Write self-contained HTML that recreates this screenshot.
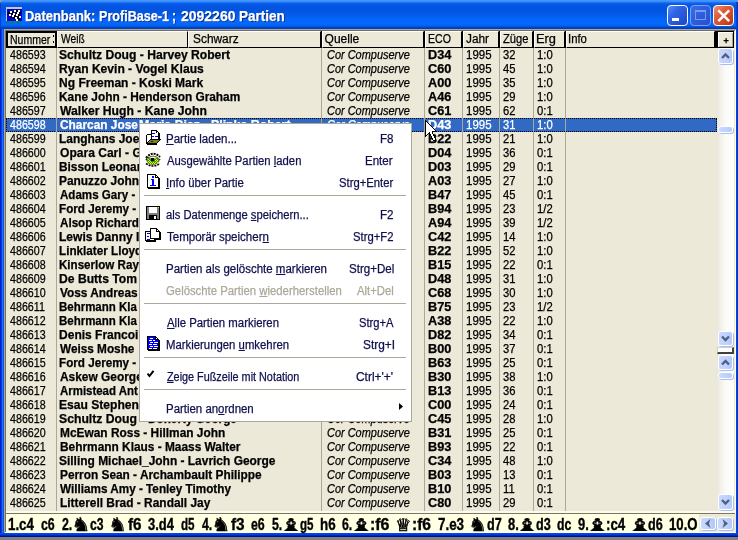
<!DOCTYPE html>
<html><head><meta charset="utf-8"><title>Datenbank: ProfiBase-1; 2092260 Partien</title>
<style>
html,body{margin:0;padding:0;background:#808080;}
body{width:738px;height:540px;overflow:hidden;position:relative;font-family:"Liberation Sans",sans-serif;font-size:12px;color:#000;}
#win{position:absolute;left:0;top:0;width:738px;height:540px;overflow:hidden;background:#808080;}
.a{position:absolute;}
.L{position:absolute;left:0;top:0;width:738px;height:540px;will-change:transform;}
.t{position:absolute;white-space:pre;transform-origin:0 0;line-height:20px;-webkit-text-stroke:0.25px currentColor;}
.t u{text-decoration:underline;text-underline-offset:1px;text-decoration-thickness:1px;}
#tb{left:0;top:0;width:738px;height:29px;border-radius:4px 2px 0 0;
background:linear-gradient(180deg,#4a98ff 0px,#3c8efb 1.5px,#1a72f2 2.5px,#0b62ea 3.5px,#0559e6 4.5px,#0355e2 6px,#0254e0 11px,#0357e4 13px,#045ce9 15px,#0462f4 17.5px,#0467fc 20px,#0468fd 24px,#0462f3 25.5px,#0354de 26.5px,#0044ca 27.5px,#0039b9 29px);}
#cornerbg{left:0;top:0;width:738px;height:10px;background:#a8a290;}
#bl{left:0;top:29px;width:4px;height:508px;background:linear-gradient(90deg,#001bd2 0,#001bd2 1px,#0a40e2 1px,#0a40e2 2px,#1670f2 2px,#1670f2 3px,#0a57e3 3px);}
#br{left:736px;top:29px;width:2px;height:508px;background:linear-gradient(90deg,#0046e6 0,#0046e6 1px,#0038d6 1px);}
#bb{left:0;top:533px;width:738px;height:4px;background:linear-gradient(180deg,#0846e2 0,#0846e2 1px,#0440dc 1px,#0440dc 2px,#0028b8 2px,#0028b8 3px,#00128e 3px);}
#client{left:4px;top:29px;width:732px;height:504px;background:#ece9d8;}
.hc{position:absolute;top:31px;height:16px;background:#ece9d8;border-top:1px solid #fff;border-left:1px solid #fff;border-right:1px solid #000;border-bottom:1px solid #000;box-sizing:border-box;height:17px;}
.vl{position:absolute;top:48px;width:1px;height:463px;background:#aca899;}
#menu{left:139px;top:123px;width:273px;height:299px;background:#fff;border:1px solid #aca899;box-sizing:border-box;}
.sep{position:absolute;left:144px;width:262px;height:1px;background:#aca899;}
.sb{position:absolute;left:718px;width:15px;box-sizing:border-box;border:1px solid #fff;border-radius:3px;background:linear-gradient(90deg,#c9d8fd 0%,#bfd1fc 60%,#b3c7f8 100%);box-shadow:1px 1px 0 #a9bdf0;}
</style></head><body>
<div id="win">
<div id="cornerbg" class="a"></div>
<div id="tb" class="a"></div>
<div class="a" style="left:736px;top:2px;width:2px;height:27px;background:linear-gradient(90deg,#0848dc,#0030c4)"></div><div class="a" style="left:0;top:3px;width:1px;height:26px;background:#0a3cd4"></div>
<div id="bl" class="a"></div><div id="br" class="a"></div><div id="bb" class="a"></div>
<div id="client" class="a"></div>
<!-- sunken border -->
<div class="a" style="left:4px;top:29px;width:732px;height:1px;background:#b0a98f"></div>
<div class="a" style="left:4px;top:29px;width:1px;height:504px;background:#b0a98f"></div>
<div class="a" style="left:5px;top:30px;width:730px;height:1px;background:#716f64"></div>
<div class="a" style="left:5px;top:30px;width:1px;height:503px;background:#716f64"></div>
<div class="a" style="left:734px;top:31px;width:1px;height:502px;background:#ece9d8"></div><div class="a" style="left:735px;top:30px;width:1px;height:503px;background:#fffef2"></div>
<!-- header cells -->
<div class="hc" style="left:6px;width:51px;border:2px solid #000;"></div>
<div class="hc" style="left:57px;width:131px"></div>
<div class="hc" style="left:188px;width:133px"></div>
<div class="hc" style="left:322px;width:102px"></div>
<div class="hc" style="left:425px;width:37px"></div>
<div class="hc" style="left:463px;width:36px"></div>
<div class="hc" style="left:500px;width:33px"></div>
<div class="hc" style="left:534px;width:31px"></div>
<div class="hc" style="left:566px;width:149px"></div>
<div class="hc" style="left:715px;width:19px;border-left:3px solid #000;border-top:1px solid #000;box-shadow:inset 1px 1px 0 #fff,inset -1px -1px 0 #aca899;"></div>
<div class="a" style="left:321px;top:31px;width:1px;height:17px;background:#000"></div>
<div class="a" style="left:424px;top:31px;width:1px;height:17px;background:#000"></div>
<div class="a" style="left:462px;top:31px;width:1px;height:17px;background:#000"></div>
<div class="a" style="left:499px;top:31px;width:1px;height:17px;background:#000"></div>
<div class="a" style="left:533px;top:31px;width:1px;height:17px;background:#000"></div>
<div class="a" style="left:565px;top:31px;width:1px;height:17px;background:#000"></div>
<div class="a" style="left:53px;top:35px;width:1px;height:2px;background:#000"></div><div class="a" style="left:53px;top:41px;width:1px;height:2px;background:#000"></div>
<!-- selected row -->
<div class="a" style="left:6px;top:118px;width:711px;height:14px;background:#316ac5;box-sizing:border-box;border:1px dotted #000;"></div>
<!-- column lines -->
<div class="vl" style="left:56px"></div><div class="vl" style="left:321px"></div><div class="vl" style="left:424px"></div>
<div class="vl" style="left:462px"></div><div class="vl" style="left:499px"></div><div class="vl" style="left:533px"></div><div class="vl" style="left:565px"></div>
<!-- scrollbar -->
<div class="a" style="left:717px;top:48px;width:17px;height:463px;background:linear-gradient(90deg,#e9e7dc 0,#f3f2ea 4px,#fbfbf8 9px,#fefefd 17px)"></div>
<!-- bottom -->
<div class="a" style="left:6px;top:511px;width:730px;height:2px;background:#fbfaf3"></div>
<div class="a" style="left:5px;top:513px;width:730px;height:1px;background:#7d775f"></div>
<div class="a" style="left:6px;top:514px;width:730px;height:19px;background:#ffffe1"></div>
<div class="a" style="left:699px;top:514px;width:37px;height:19px;background:#ece9d8"></div>
<div class="a" style="left:5px;top:532px;width:731px;height:1px;background:#fff"></div>
<div class="sb" style="top:48px;height:16px"></div><svg class="a" style="left:718px;top:48px" width="15" height="16" viewBox="0 0 15 16"><path d="M4 10.0 L7.5 6.5 L11 10.0" stroke="#4d6185" stroke-width="2.4" fill="none"/></svg>
<div class="sb" style="top:126px;height:7px"></div>
<div class="sb" style="top:331px;height:15px"></div><svg class="a" style="left:718px;top:331px" width="15" height="15" viewBox="0 0 15 15"><path d="M4 5.5 L7.5 9.0 L11 5.5" stroke="#4d6185" stroke-width="2.4" fill="none"/></svg>
<div class="a" style="left:717px;top:347px;width:17px;height:7px;background:#fff;border-right:2px solid #404040;border-bottom:2px solid #404040;border-top:1px solid #d4d0c8;border-left:1px solid #d4d0c8;box-sizing:border-box"></div>
<div class="sb" style="top:355px;height:15px"></div><svg class="a" style="left:718px;top:355px" width="15" height="15" viewBox="0 0 15 15"><path d="M4 9.5 L7.5 6.0 L11 9.5" stroke="#4d6185" stroke-width="2.4" fill="none"/></svg>
<div class="sb" style="top:372px;height:7px"></div>
<div class="sb" style="top:494px;height:16px"></div><svg class="a" style="left:718px;top:494px" width="15" height="16" viewBox="0 0 15 16"><path d="M4 6.0 L7.5 9.5 L11 6.0" stroke="#4d6185" stroke-width="2.4" fill="none"/></svg>
<div class="sb" style="left:700px;top:517px;width:16px;height:13px"></div>
<svg class="a" style="left:700px;top:517px" width="16" height="13" viewBox="0 0 16 13"><path d="M10.5 2 L5 6.5 L10.5 11 L9 6.5 Z" fill="#4d6185"/></svg>
<div class="sb" style="left:717px;top:517px;width:16px;height:13px"></div>
<svg class="a" style="left:717px;top:517px" width="16" height="13" viewBox="0 0 16 13"><path d="M5.5 2 L11 6.5 L5.5 11 L7 6.5 Z" fill="#4d6185"/></svg>
<div class="L"><span class="t" style="top:44.84px;font-size:12px;left:9.80px;transform:scaleX(0.8900);">486593</span>
<span class="t" style="top:44.84px;font-size:12px;left:59.09px;transform:scaleX(1.0101);font-weight:bold;">Schultz Doug - Harvey Robert</span>
<span class="t" style="top:44.84px;font-size:12px;left:326.79px;transform:scaleX(0.9124);font-style:italic;">Cor Compuserve</span>
<span class="t" style="top:44.84px;font-size:12px;left:427.64px;transform:scaleX(1.0619);font-weight:bold;">D34</span>
<span class="t" style="top:44.84px;font-size:12px;left:465.64px;transform:scaleX(0.9560);">1995</span>
<span class="t" style="top:44.84px;font-size:12px;left:503.27px;transform:scaleX(0.9333);">32</span>
<span class="t" style="top:44.84px;font-size:12px;left:537.26px;transform:scaleX(0.9400);">1:0</span>
<span class="t" style="top:58.84px;font-size:12px;left:9.80px;transform:scaleX(0.8900);">486594</span>
<span class="t" style="top:58.84px;font-size:12px;left:59.09px;transform:scaleX(1.0063);font-weight:bold;">Ryan Kevin - Vogel Klaus</span>
<span class="t" style="top:58.84px;font-size:12px;left:326.79px;transform:scaleX(0.9124);font-style:italic;">Cor Compuserve</span>
<span class="t" style="top:58.84px;font-size:12px;left:427.64px;transform:scaleX(1.0619);font-weight:bold;">C60</span>
<span class="t" style="top:58.84px;font-size:12px;left:465.64px;transform:scaleX(0.9560);">1995</span>
<span class="t" style="top:58.84px;font-size:12px;left:503.27px;transform:scaleX(0.9333);">45</span>
<span class="t" style="top:58.84px;font-size:12px;left:537.26px;transform:scaleX(0.9400);">1:0</span>
<span class="t" style="top:72.84px;font-size:12px;left:9.80px;transform:scaleX(0.8900);">486595</span>
<span class="t" style="top:72.84px;font-size:12px;left:59.10px;font-weight:bold;">Ng Freeman - Koski Mark</span>
<span class="t" style="top:72.84px;font-size:12px;left:326.79px;transform:scaleX(0.9124);font-style:italic;">Cor Compuserve</span>
<span class="t" style="top:72.84px;font-size:12px;left:427.64px;transform:scaleX(1.0619);font-weight:bold;">A00</span>
<span class="t" style="top:72.84px;font-size:12px;left:465.64px;transform:scaleX(0.9560);">1995</span>
<span class="t" style="top:72.84px;font-size:12px;left:503.27px;transform:scaleX(0.9333);">35</span>
<span class="t" style="top:72.84px;font-size:12px;left:537.26px;transform:scaleX(0.9400);">1:0</span>
<span class="t" style="top:86.84px;font-size:12px;left:9.80px;transform:scaleX(0.8900);">486596</span>
<span class="t" style="top:86.84px;font-size:12px;left:59.11px;transform:scaleX(0.9885);font-weight:bold;">Kane John - Henderson Graham</span>
<span class="t" style="top:86.84px;font-size:12px;left:326.79px;transform:scaleX(0.9124);font-style:italic;">Cor Compuserve</span>
<span class="t" style="top:86.84px;font-size:12px;left:427.64px;transform:scaleX(1.0619);font-weight:bold;">A46</span>
<span class="t" style="top:86.84px;font-size:12px;left:465.64px;transform:scaleX(0.9560);">1995</span>
<span class="t" style="top:86.84px;font-size:12px;left:503.27px;transform:scaleX(0.9333);">29</span>
<span class="t" style="top:86.84px;font-size:12px;left:537.26px;transform:scaleX(0.9400);">1:0</span>
<span class="t" style="top:100.84px;font-size:12px;left:9.80px;transform:scaleX(0.8900);">486597</span>
<span class="t" style="top:100.84px;font-size:12px;left:60.10px;transform:scaleX(1.0132);font-weight:bold;">Walker Hugh - Kane John</span>
<span class="t" style="top:100.84px;font-size:12px;left:326.79px;transform:scaleX(0.9124);font-style:italic;">Cor Compuserve</span>
<span class="t" style="top:100.84px;font-size:12px;left:427.64px;transform:scaleX(1.0619);font-weight:bold;">C61</span>
<span class="t" style="top:100.84px;font-size:12px;left:465.64px;transform:scaleX(0.9560);">1995</span>
<span class="t" style="top:100.84px;font-size:12px;left:503.27px;transform:scaleX(0.9333);">62</span>
<span class="t" style="top:100.84px;font-size:12px;left:537.26px;transform:scaleX(0.9400);">0:1</span>
<span class="t" style="top:114.84px;font-size:12px;left:9.80px;transform:scaleX(0.8900);color:#fff;">486598</span>
<span class="t" style="top:114.84px;font-size:12px;left:60.10px;transform:scaleX(0.9897);color:#fff;font-weight:bold;">Charcan Jose</span>
<span class="t" style="top:114.84px;font-size:12px;left:138.57px;transform:scaleX(1.0281);color:#fff;font-weight:bold;">Maria Diaz - Plinke Robert</span>
<span class="t" style="top:114.84px;font-size:12px;left:326.79px;transform:scaleX(0.9124);color:#fff;font-style:italic;">Cor Compuserve</span>
<span class="t" style="top:114.84px;font-size:12px;left:427.64px;transform:scaleX(1.0619);color:#fff;font-weight:bold;">D43</span>
<span class="t" style="top:114.84px;font-size:12px;left:465.64px;transform:scaleX(0.9560);color:#fff;">1995</span>
<span class="t" style="top:114.84px;font-size:12px;left:503.27px;transform:scaleX(0.9333);color:#fff;">31</span>
<span class="t" style="top:114.84px;font-size:12px;left:537.26px;transform:scaleX(0.9400);color:#fff;">1:0</span>
<span class="t" style="top:128.84px;font-size:12px;left:9.80px;transform:scaleX(0.8900);">486599</span>
<span class="t" style="top:128.84px;font-size:12px;left:59.11px;transform:scaleX(0.9949);font-weight:bold;">Langhans Joe</span>
<span class="t" style="top:128.84px;font-size:12px;left:326.79px;transform:scaleX(0.9124);font-style:italic;">Cor Compuserve</span>
<span class="t" style="top:128.84px;font-size:12px;left:427.64px;transform:scaleX(1.0619);font-weight:bold;">B22</span>
<span class="t" style="top:128.84px;font-size:12px;left:465.64px;transform:scaleX(0.9560);">1995</span>
<span class="t" style="top:128.84px;font-size:12px;left:503.27px;transform:scaleX(0.9333);">21</span>
<span class="t" style="top:128.84px;font-size:12px;left:537.26px;transform:scaleX(0.9400);">1:0</span>
<span class="t" style="top:142.84px;font-size:12px;left:9.80px;transform:scaleX(0.8900);">486600</span>
<span class="t" style="top:142.84px;font-size:12px;left:60.10px;transform:scaleX(1.0049);font-weight:bold;">Opara Carl - G</span>
<span class="t" style="top:142.84px;font-size:12px;left:326.79px;transform:scaleX(0.9124);font-style:italic;">Cor Compuserve</span>
<span class="t" style="top:142.84px;font-size:12px;left:427.64px;transform:scaleX(1.0619);font-weight:bold;">D04</span>
<span class="t" style="top:142.84px;font-size:12px;left:465.64px;transform:scaleX(0.9560);">1995</span>
<span class="t" style="top:142.84px;font-size:12px;left:503.27px;transform:scaleX(0.9333);">36</span>
<span class="t" style="top:142.84px;font-size:12px;left:537.26px;transform:scaleX(0.9400);">0:1</span>
<span class="t" style="top:156.84px;font-size:12px;left:9.80px;transform:scaleX(0.8900);">486601</span>
<span class="t" style="top:156.84px;font-size:12px;left:59.11px;transform:scaleX(0.9866);font-weight:bold;">Bisson Leonar</span>
<span class="t" style="top:156.84px;font-size:12px;left:326.79px;transform:scaleX(0.9124);font-style:italic;">Cor Compuserve</span>
<span class="t" style="top:156.84px;font-size:12px;left:427.64px;transform:scaleX(1.0619);font-weight:bold;">D03</span>
<span class="t" style="top:156.84px;font-size:12px;left:465.64px;transform:scaleX(0.9560);">1995</span>
<span class="t" style="top:156.84px;font-size:12px;left:503.27px;transform:scaleX(0.9333);">29</span>
<span class="t" style="top:156.84px;font-size:12px;left:537.26px;transform:scaleX(0.9400);">0:1</span>
<span class="t" style="top:170.84px;font-size:12px;left:9.80px;transform:scaleX(0.8900);">486602</span>
<span class="t" style="top:170.84px;font-size:12px;left:59.11px;transform:scaleX(0.9924);font-weight:bold;">Panuzzo John</span>
<span class="t" style="top:170.84px;font-size:12px;left:326.79px;transform:scaleX(0.9124);font-style:italic;">Cor Compuserve</span>
<span class="t" style="top:170.84px;font-size:12px;left:427.64px;transform:scaleX(1.0619);font-weight:bold;">A03</span>
<span class="t" style="top:170.84px;font-size:12px;left:465.64px;transform:scaleX(0.9560);">1995</span>
<span class="t" style="top:170.84px;font-size:12px;left:503.27px;transform:scaleX(0.9333);">27</span>
<span class="t" style="top:170.84px;font-size:12px;left:537.26px;transform:scaleX(0.9400);">1:0</span>
<span class="t" style="top:184.84px;font-size:12px;left:9.80px;transform:scaleX(0.8900);">486603</span>
<span class="t" style="top:184.84px;font-size:12px;left:60.10px;transform:scaleX(0.9641);font-weight:bold;">Adams Gary -</span>
<span class="t" style="top:184.84px;font-size:12px;left:326.79px;transform:scaleX(0.9124);font-style:italic;">Cor Compuserve</span>
<span class="t" style="top:184.84px;font-size:12px;left:427.64px;transform:scaleX(1.0619);font-weight:bold;">B47</span>
<span class="t" style="top:184.84px;font-size:12px;left:465.64px;transform:scaleX(0.9560);">1995</span>
<span class="t" style="top:184.84px;font-size:12px;left:503.27px;transform:scaleX(0.9333);">45</span>
<span class="t" style="top:184.84px;font-size:12px;left:537.26px;transform:scaleX(0.9400);">0:1</span>
<span class="t" style="top:198.84px;font-size:12px;left:9.80px;transform:scaleX(0.8900);">486604</span>
<span class="t" style="top:198.84px;font-size:12px;left:59.13px;transform:scaleX(0.9731);font-weight:bold;">Ford Jeremy -</span>
<span class="t" style="top:198.84px;font-size:12px;left:326.79px;transform:scaleX(0.9124);font-style:italic;">Cor Compuserve</span>
<span class="t" style="top:198.84px;font-size:12px;left:427.64px;transform:scaleX(1.0619);font-weight:bold;">B94</span>
<span class="t" style="top:198.84px;font-size:12px;left:465.64px;transform:scaleX(0.9560);">1995</span>
<span class="t" style="top:198.84px;font-size:12px;left:503.27px;transform:scaleX(0.9333);">23</span>
<span class="t" style="top:198.84px;font-size:12px;left:537.26px;transform:scaleX(0.9400);">1/2</span>
<span class="t" style="top:212.84px;font-size:12px;left:9.80px;transform:scaleX(0.8900);">486605</span>
<span class="t" style="top:212.84px;font-size:12px;left:60.10px;transform:scaleX(0.9704);font-weight:bold;">Alsop Richard</span>
<span class="t" style="top:212.84px;font-size:12px;left:326.79px;transform:scaleX(0.9124);font-style:italic;">Cor Compuserve</span>
<span class="t" style="top:212.84px;font-size:12px;left:427.64px;transform:scaleX(1.0619);font-weight:bold;">A94</span>
<span class="t" style="top:212.84px;font-size:12px;left:465.64px;transform:scaleX(0.9560);">1995</span>
<span class="t" style="top:212.84px;font-size:12px;left:503.27px;transform:scaleX(0.9333);">39</span>
<span class="t" style="top:212.84px;font-size:12px;left:537.26px;transform:scaleX(0.9400);">1/2</span>
<span class="t" style="top:226.84px;font-size:12px;left:9.80px;transform:scaleX(0.8900);">486606</span>
<span class="t" style="top:226.84px;font-size:12px;left:59.09px;transform:scaleX(1.0051);font-weight:bold;">Lewis Danny I</span>
<span class="t" style="top:226.84px;font-size:12px;left:326.79px;transform:scaleX(0.9124);font-style:italic;">Cor Compuserve</span>
<span class="t" style="top:226.84px;font-size:12px;left:427.64px;transform:scaleX(1.0619);font-weight:bold;">C42</span>
<span class="t" style="top:226.84px;font-size:12px;left:465.64px;transform:scaleX(0.9560);">1995</span>
<span class="t" style="top:226.84px;font-size:12px;left:503.27px;transform:scaleX(0.9333);">14</span>
<span class="t" style="top:226.84px;font-size:12px;left:537.26px;transform:scaleX(0.9400);">1:0</span>
<span class="t" style="top:240.84px;font-size:12px;left:9.80px;transform:scaleX(0.8900);">486607</span>
<span class="t" style="top:240.84px;font-size:12px;left:59.12px;transform:scaleX(0.9750);font-weight:bold;">Linklater Lloyd</span>
<span class="t" style="top:240.84px;font-size:12px;left:326.79px;transform:scaleX(0.9124);font-style:italic;">Cor Compuserve</span>
<span class="t" style="top:240.84px;font-size:12px;left:427.64px;transform:scaleX(1.0619);font-weight:bold;">B22</span>
<span class="t" style="top:240.84px;font-size:12px;left:465.64px;transform:scaleX(0.9560);">1995</span>
<span class="t" style="top:240.84px;font-size:12px;left:503.27px;transform:scaleX(0.9333);">52</span>
<span class="t" style="top:240.84px;font-size:12px;left:537.26px;transform:scaleX(0.9400);">1:0</span>
<span class="t" style="top:254.84px;font-size:12px;left:9.80px;transform:scaleX(0.8900);">486608</span>
<span class="t" style="top:254.84px;font-size:12px;left:59.13px;transform:scaleX(0.9659);font-weight:bold;">Kinserlow Ray</span>
<span class="t" style="top:254.84px;font-size:12px;left:326.79px;transform:scaleX(0.9124);font-style:italic;">Cor Compuserve</span>
<span class="t" style="top:254.84px;font-size:12px;left:427.64px;transform:scaleX(1.0619);font-weight:bold;">B15</span>
<span class="t" style="top:254.84px;font-size:12px;left:465.64px;transform:scaleX(0.9560);">1995</span>
<span class="t" style="top:254.84px;font-size:12px;left:503.27px;transform:scaleX(0.9333);">22</span>
<span class="t" style="top:254.84px;font-size:12px;left:537.26px;transform:scaleX(0.9400);">0:1</span>
<span class="t" style="top:268.84px;font-size:12px;left:9.80px;transform:scaleX(0.8900);">486609</span>
<span class="t" style="top:268.84px;font-size:12px;left:59.09px;transform:scaleX(1.0118);font-weight:bold;">De Butts Tom</span>
<span class="t" style="top:268.84px;font-size:12px;left:326.79px;transform:scaleX(0.9124);font-style:italic;">Cor Compuserve</span>
<span class="t" style="top:268.84px;font-size:12px;left:427.64px;transform:scaleX(1.0619);font-weight:bold;">D48</span>
<span class="t" style="top:268.84px;font-size:12px;left:465.64px;transform:scaleX(0.9560);">1995</span>
<span class="t" style="top:268.84px;font-size:12px;left:503.27px;transform:scaleX(0.9333);">31</span>
<span class="t" style="top:268.84px;font-size:12px;left:537.26px;transform:scaleX(0.9400);">1:0</span>
<span class="t" style="top:282.84px;font-size:12px;left:9.80px;transform:scaleX(0.8900);">486610</span>
<span class="t" style="top:282.84px;font-size:12px;left:60.10px;transform:scaleX(0.9859);font-weight:bold;">Voss Andreas</span>
<span class="t" style="top:282.84px;font-size:12px;left:326.79px;transform:scaleX(0.9124);font-style:italic;">Cor Compuserve</span>
<span class="t" style="top:282.84px;font-size:12px;left:427.64px;transform:scaleX(1.0619);font-weight:bold;">C68</span>
<span class="t" style="top:282.84px;font-size:12px;left:465.64px;transform:scaleX(0.9560);">1995</span>
<span class="t" style="top:282.84px;font-size:12px;left:503.27px;transform:scaleX(0.9333);">30</span>
<span class="t" style="top:282.84px;font-size:12px;left:537.26px;transform:scaleX(0.9400);">1:0</span>
<span class="t" style="top:296.84px;font-size:12px;left:9.80px;transform:scaleX(0.8900);">486611</span>
<span class="t" style="top:296.84px;font-size:12px;left:59.14px;transform:scaleX(0.9568);font-weight:bold;">Behrmann Kla</span>
<span class="t" style="top:296.84px;font-size:12px;left:326.79px;transform:scaleX(0.9124);font-style:italic;">Cor Compuserve</span>
<span class="t" style="top:296.84px;font-size:12px;left:427.64px;transform:scaleX(1.0619);font-weight:bold;">B75</span>
<span class="t" style="top:296.84px;font-size:12px;left:465.64px;transform:scaleX(0.9560);">1995</span>
<span class="t" style="top:296.84px;font-size:12px;left:503.27px;transform:scaleX(0.9333);">23</span>
<span class="t" style="top:296.84px;font-size:12px;left:537.26px;transform:scaleX(0.9400);">1/2</span>
<span class="t" style="top:310.84px;font-size:12px;left:9.80px;transform:scaleX(0.8900);">486612</span>
<span class="t" style="top:310.84px;font-size:12px;left:59.14px;transform:scaleX(0.9568);font-weight:bold;">Behrmann Kla</span>
<span class="t" style="top:310.84px;font-size:12px;left:326.79px;transform:scaleX(0.9124);font-style:italic;">Cor Compuserve</span>
<span class="t" style="top:310.84px;font-size:12px;left:427.64px;transform:scaleX(1.0619);font-weight:bold;">A38</span>
<span class="t" style="top:310.84px;font-size:12px;left:465.64px;transform:scaleX(0.9560);">1995</span>
<span class="t" style="top:310.84px;font-size:12px;left:503.27px;transform:scaleX(0.9333);">22</span>
<span class="t" style="top:310.84px;font-size:12px;left:537.26px;transform:scaleX(0.9400);">1:0</span>
<span class="t" style="top:324.84px;font-size:12px;left:9.80px;transform:scaleX(0.8900);">486613</span>
<span class="t" style="top:324.84px;font-size:12px;left:59.10px;font-weight:bold;">Denis Francoi</span>
<span class="t" style="top:324.84px;font-size:12px;left:326.79px;transform:scaleX(0.9124);font-style:italic;">Cor Compuserve</span>
<span class="t" style="top:324.84px;font-size:12px;left:427.64px;transform:scaleX(1.0619);font-weight:bold;">D82</span>
<span class="t" style="top:324.84px;font-size:12px;left:465.64px;transform:scaleX(0.9560);">1995</span>
<span class="t" style="top:324.84px;font-size:12px;left:503.27px;transform:scaleX(0.9333);">34</span>
<span class="t" style="top:324.84px;font-size:12px;left:537.26px;transform:scaleX(0.9400);">0:1</span>
<span class="t" style="top:338.84px;font-size:12px;left:9.80px;transform:scaleX(0.8900);">486614</span>
<span class="t" style="top:338.84px;font-size:12px;left:60.10px;transform:scaleX(0.9816);font-weight:bold;">Weiss Moshe</span>
<span class="t" style="top:338.84px;font-size:12px;left:326.79px;transform:scaleX(0.9124);font-style:italic;">Cor Compuserve</span>
<span class="t" style="top:338.84px;font-size:12px;left:427.64px;transform:scaleX(1.0619);font-weight:bold;">B00</span>
<span class="t" style="top:338.84px;font-size:12px;left:465.64px;transform:scaleX(0.9560);">1995</span>
<span class="t" style="top:338.84px;font-size:12px;left:503.27px;transform:scaleX(0.9333);">37</span>
<span class="t" style="top:338.84px;font-size:12px;left:537.26px;transform:scaleX(0.9400);">0:1</span>
<span class="t" style="top:352.84px;font-size:12px;left:9.80px;transform:scaleX(0.8900);">486615</span>
<span class="t" style="top:352.84px;font-size:12px;left:59.13px;transform:scaleX(0.9731);font-weight:bold;">Ford Jeremy -</span>
<span class="t" style="top:352.84px;font-size:12px;left:326.79px;transform:scaleX(0.9124);font-style:italic;">Cor Compuserve</span>
<span class="t" style="top:352.84px;font-size:12px;left:427.64px;transform:scaleX(1.0619);font-weight:bold;">B63</span>
<span class="t" style="top:352.84px;font-size:12px;left:465.64px;transform:scaleX(0.9560);">1995</span>
<span class="t" style="top:352.84px;font-size:12px;left:503.27px;transform:scaleX(0.9333);">25</span>
<span class="t" style="top:352.84px;font-size:12px;left:537.26px;transform:scaleX(0.9400);">0:1</span>
<span class="t" style="top:366.84px;font-size:12px;left:9.80px;transform:scaleX(0.8900);">486616</span>
<span class="t" style="top:366.84px;font-size:12px;left:60.10px;transform:scaleX(0.9928);font-weight:bold;">Askew George</span>
<span class="t" style="top:366.84px;font-size:12px;left:326.79px;transform:scaleX(0.9124);font-style:italic;">Cor Compuserve</span>
<span class="t" style="top:366.84px;font-size:12px;left:427.64px;transform:scaleX(1.0619);font-weight:bold;">B30</span>
<span class="t" style="top:366.84px;font-size:12px;left:465.64px;transform:scaleX(0.9560);">1995</span>
<span class="t" style="top:366.84px;font-size:12px;left:503.27px;transform:scaleX(0.9333);">38</span>
<span class="t" style="top:366.84px;font-size:12px;left:537.26px;transform:scaleX(0.9400);">1:0</span>
<span class="t" style="top:380.84px;font-size:12px;left:9.80px;transform:scaleX(0.8900);">486617</span>
<span class="t" style="top:380.84px;font-size:12px;left:60.10px;transform:scaleX(0.9531);font-weight:bold;">Armistead Ant</span>
<span class="t" style="top:380.84px;font-size:12px;left:326.79px;transform:scaleX(0.9124);font-style:italic;">Cor Compuserve</span>
<span class="t" style="top:380.84px;font-size:12px;left:427.64px;transform:scaleX(1.0619);font-weight:bold;">B13</span>
<span class="t" style="top:380.84px;font-size:12px;left:465.64px;transform:scaleX(0.9560);">1995</span>
<span class="t" style="top:380.84px;font-size:12px;left:503.27px;transform:scaleX(0.9333);">36</span>
<span class="t" style="top:380.84px;font-size:12px;left:537.26px;transform:scaleX(0.9400);">0:1</span>
<span class="t" style="top:394.84px;font-size:12px;left:9.80px;transform:scaleX(0.8900);">486618</span>
<span class="t" style="top:394.84px;font-size:12px;left:59.09px;transform:scaleX(1.0077);font-weight:bold;">Esau Stephen</span>
<span class="t" style="top:394.84px;font-size:12px;left:326.79px;transform:scaleX(0.9124);font-style:italic;">Cor Compuserve</span>
<span class="t" style="top:394.84px;font-size:12px;left:427.64px;transform:scaleX(1.0619);font-weight:bold;">C00</span>
<span class="t" style="top:394.84px;font-size:12px;left:465.64px;transform:scaleX(0.9560);">1995</span>
<span class="t" style="top:394.84px;font-size:12px;left:503.27px;transform:scaleX(0.9333);">24</span>
<span class="t" style="top:394.84px;font-size:12px;left:537.26px;transform:scaleX(0.9400);">0:1</span>
<span class="t" style="top:408.84px;font-size:12px;left:9.80px;transform:scaleX(0.8900);">486619</span>
<span class="t" style="top:408.84px;font-size:12px;left:59.08px;transform:scaleX(1.0173);font-weight:bold;">Schultz Doug</span>
<span class="t" style="top:408.84px;font-size:12px;left:148.32px;transform:scaleX(0.9798);font-weight:bold;">Doherty George</span>
<span class="t" style="top:408.84px;font-size:12px;left:326.79px;transform:scaleX(0.9124);font-style:italic;">Cor Compuserve</span>
<span class="t" style="top:408.84px;font-size:12px;left:427.64px;transform:scaleX(1.0619);font-weight:bold;">C45</span>
<span class="t" style="top:408.84px;font-size:12px;left:465.64px;transform:scaleX(0.9560);">1995</span>
<span class="t" style="top:408.84px;font-size:12px;left:503.27px;transform:scaleX(0.9333);">28</span>
<span class="t" style="top:408.84px;font-size:12px;left:537.26px;transform:scaleX(0.9400);">1:0</span>
<span class="t" style="top:422.84px;font-size:12px;left:9.80px;transform:scaleX(0.8900);">486620</span>
<span class="t" style="top:422.84px;font-size:12px;left:59.51px;transform:scaleX(0.9915);font-weight:bold;">McEwan Ross - Hillman John</span>
<span class="t" style="top:422.84px;font-size:12px;left:326.79px;transform:scaleX(0.9124);font-style:italic;">Cor Compuserve</span>
<span class="t" style="top:422.84px;font-size:12px;left:427.64px;transform:scaleX(1.0619);font-weight:bold;">B31</span>
<span class="t" style="top:422.84px;font-size:12px;left:465.64px;transform:scaleX(0.9560);">1995</span>
<span class="t" style="top:422.84px;font-size:12px;left:503.27px;transform:scaleX(0.9333);">25</span>
<span class="t" style="top:422.84px;font-size:12px;left:537.26px;transform:scaleX(0.9400);">0:1</span>
<span class="t" style="top:436.84px;font-size:12px;left:9.80px;transform:scaleX(0.8900);">486621</span>
<span class="t" style="top:436.84px;font-size:12px;left:59.51px;transform:scaleX(0.9901);font-weight:bold;">Behrmann Klaus - Maass Walter</span>
<span class="t" style="top:436.84px;font-size:12px;left:326.79px;transform:scaleX(0.9124);font-style:italic;">Cor Compuserve</span>
<span class="t" style="top:436.84px;font-size:12px;left:427.64px;transform:scaleX(1.0619);font-weight:bold;">B93</span>
<span class="t" style="top:436.84px;font-size:12px;left:465.64px;transform:scaleX(0.9560);">1995</span>
<span class="t" style="top:436.84px;font-size:12px;left:503.27px;transform:scaleX(0.9333);">22</span>
<span class="t" style="top:436.84px;font-size:12px;left:537.26px;transform:scaleX(0.9400);">0:1</span>
<span class="t" style="top:450.84px;font-size:12px;left:9.80px;transform:scaleX(0.8900);">486622</span>
<span class="t" style="top:450.84px;font-size:12px;left:59.10px;transform:scaleX(0.9958);font-weight:bold;">Silling Michael_John - Lavrich George</span>
<span class="t" style="top:450.84px;font-size:12px;left:326.79px;transform:scaleX(0.9124);font-style:italic;">Cor Compuserve</span>
<span class="t" style="top:450.84px;font-size:12px;left:427.64px;transform:scaleX(1.0619);font-weight:bold;">C34</span>
<span class="t" style="top:450.84px;font-size:12px;left:465.64px;transform:scaleX(0.9560);">1995</span>
<span class="t" style="top:450.84px;font-size:12px;left:503.27px;transform:scaleX(0.9333);">48</span>
<span class="t" style="top:450.84px;font-size:12px;left:537.26px;transform:scaleX(0.9400);">1:0</span>
<span class="t" style="top:464.84px;font-size:12px;left:9.80px;transform:scaleX(0.8900);">486623</span>
<span class="t" style="top:464.84px;font-size:12px;left:59.51px;transform:scaleX(0.9872);font-weight:bold;">Perron Sean - Archambault Philippe</span>
<span class="t" style="top:464.84px;font-size:12px;left:326.79px;transform:scaleX(0.9124);font-style:italic;">Cor Compuserve</span>
<span class="t" style="top:464.84px;font-size:12px;left:427.64px;transform:scaleX(1.0619);font-weight:bold;">B03</span>
<span class="t" style="top:464.84px;font-size:12px;left:465.64px;transform:scaleX(0.9560);">1995</span>
<span class="t" style="top:464.84px;font-size:12px;left:503.27px;transform:scaleX(0.9333);">13</span>
<span class="t" style="top:464.84px;font-size:12px;left:537.26px;transform:scaleX(0.9400);">0:1</span>
<span class="t" style="top:478.84px;font-size:12px;left:9.80px;transform:scaleX(0.8900);">486624</span>
<span class="t" style="top:478.84px;font-size:12px;left:60.10px;transform:scaleX(0.9766);font-weight:bold;">Williams Amy - Tenley Timothy</span>
<span class="t" style="top:478.84px;font-size:12px;left:326.79px;transform:scaleX(0.9124);font-style:italic;">Cor Compuserve</span>
<span class="t" style="top:478.84px;font-size:12px;left:427.64px;transform:scaleX(1.0619);font-weight:bold;">B10</span>
<span class="t" style="top:478.84px;font-size:12px;left:465.64px;transform:scaleX(0.9560);">1995</span>
<span class="t" style="top:478.84px;font-size:12px;left:503.27px;transform:scaleX(0.9333);">11</span>
<span class="t" style="top:478.84px;font-size:12px;left:537.26px;transform:scaleX(0.9400);">0:1</span>
<span class="t" style="top:492.84px;font-size:12px;left:9.80px;transform:scaleX(0.8900);">486625</span>
<span class="t" style="top:492.84px;font-size:12px;left:59.51px;transform:scaleX(0.9933);font-weight:bold;">Litterell Brad - Randall Jay</span>
<span class="t" style="top:492.84px;font-size:12px;left:326.79px;transform:scaleX(0.9124);font-style:italic;">Cor Compuserve</span>
<span class="t" style="top:492.84px;font-size:12px;left:427.64px;transform:scaleX(1.0619);font-weight:bold;">C80</span>
<span class="t" style="top:492.84px;font-size:12px;left:465.64px;transform:scaleX(0.9560);">1995</span>
<span class="t" style="top:492.84px;font-size:12px;left:503.27px;transform:scaleX(0.9333);">29</span>
<span class="t" style="top:492.84px;font-size:12px;left:537.26px;transform:scaleX(0.9400);">0:1</span>
<span class="t" style="top:30.04px;font-size:12px;left:9.92px;transform:scaleX(0.8778);">Nummer</span>
<span class="t" style="top:29.04px;font-size:12px;left:60.90px;transform:scaleX(0.8556);">Weiß</span>
<span class="t" style="top:29.04px;font-size:12px;left:192.71px;transform:scaleX(0.9911);">Schwarz</span>
<span class="t" style="top:29.04px;font-size:12px;left:324.60px;">Quelle</span>
<span class="t" style="top:29.04px;font-size:12px;left:427.52px;transform:scaleX(0.8800);">ECO</span>
<span class="t" style="top:29.04px;font-size:12px;left:465.50px;transform:scaleX(0.9870);">Jahr</span>
<span class="t" style="top:29.04px;font-size:12px;left:503.30px;transform:scaleX(0.9296);">Züge</span>
<span class="t" style="top:29.04px;font-size:12px;left:535.93px;transform:scaleX(1.0706);">Erg</span>
<span class="t" style="top:29.04px;font-size:12px;left:568.16px;transform:scaleX(0.9421);">Info</span>
<span class="t" style="top:31.08px;font-size:9px;left:723.40px;font-weight:bold;">+</span>
<span class="t" style="top:6.18px;font-size:14.5px;left:25.21px;transform:scaleX(0.8896);font-weight:bold;color:#fff;text-shadow:1px 1px 0 #0a2a80;">Datenbank:</span>
<span class="t" style="top:6.18px;font-size:14.5px;left:99.13px;transform:scaleX(0.8671);font-weight:bold;color:#fff;text-shadow:1px 1px 0 #0a2a80;">ProfiBase-1</span>
<span class="t" style="top:6.18px;font-size:14.5px;left:171.67px;transform:scaleX(0.8333);font-weight:bold;color:#fff;text-shadow:1px 1px 0 #0a2a80;">;</span>
<span class="t" style="top:6.18px;font-size:14.5px;left:180.80px;transform:scaleX(0.9643);font-weight:bold;color:#fff;text-shadow:1px 1px 0 #0a2a80;">2092260</span>
<span class="t" style="top:6.18px;font-size:14.5px;left:239.47px;transform:scaleX(0.9319);font-weight:bold;color:#fff;text-shadow:1px 1px 0 #0a2a80;">Partien</span>
<span class="t" style="top:515.26px;font-size:16px;left:8.37px;transform:scaleX(0.8333);font-weight:bold;-webkit-text-stroke:0.35px #000;">1.c4</span>
<span class="t" style="top:515.26px;font-size:16px;left:40.80px;transform:scaleX(0.7722);font-weight:bold;-webkit-text-stroke:0.35px #000;">c6</span>
<span class="t" style="top:515.26px;font-size:16px;left:62.00px;transform:scaleX(0.7692);font-weight:bold;-webkit-text-stroke:0.35px #000;">2.</span>
<span class="t" style="top:514.00px;font-size:19px;font-family:'DejaVu Sans',sans-serif;left:70.71px;transform:scaleX(1.1636);">♞</span>
<span class="t" style="top:515.26px;font-size:16px;left:90.00px;transform:scaleX(0.7611);font-weight:bold;-webkit-text-stroke:0.35px #000;">c3</span>
<span class="t" style="top:514.00px;font-size:19px;font-family:'DejaVu Sans',sans-serif;left:107.92px;transform:scaleX(1.1273);">♞</span>
<span class="t" style="top:515.26px;font-size:16px;left:127.50px;transform:scaleX(0.9500);font-weight:bold;-webkit-text-stroke:0.35px #000;">f6</span>
<span class="t" style="top:515.26px;font-size:16px;left:148.30px;transform:scaleX(0.8094);font-weight:bold;-webkit-text-stroke:0.35px #000;">3.d4</span>
<span class="t" style="top:515.26px;font-size:16px;left:181.20px;transform:scaleX(0.7263);font-weight:bold;-webkit-text-stroke:0.35px #000;">d5</span>
<span class="t" style="top:515.26px;font-size:16px;left:202.00px;transform:scaleX(0.7692);font-weight:bold;-webkit-text-stroke:0.35px #000;">4.</span>
<span class="t" style="top:514.00px;font-size:19px;font-family:'DejaVu Sans',sans-serif;left:210.71px;transform:scaleX(1.1636);">♞</span>
<span class="t" style="top:515.26px;font-size:16px;left:230.80px;transform:scaleX(0.9571);font-weight:bold;-webkit-text-stroke:0.35px #000;">f3</span>
<span class="t" style="top:515.26px;font-size:16px;left:250.80px;transform:scaleX(0.7722);font-weight:bold;-webkit-text-stroke:0.35px #000;">e6</span>
<span class="t" style="top:515.26px;font-size:16px;left:272.00px;transform:scaleX(0.7692);font-weight:bold;-webkit-text-stroke:0.35px #000;">5.</span>
<span class="t" style="top:515.21px;font-size:19px;font-family:'DejaVu Sans',sans-serif;left:278.40px;transform:scale(1.5250,0.9286);">♝</span>
<span class="t" style="top:515.26px;font-size:16px;left:300.00px;transform:scaleX(0.7211);font-weight:bold;-webkit-text-stroke:0.35px #000;">g5</span>
<span class="t" style="top:515.26px;font-size:16px;left:319.96px;transform:scaleX(0.8353);font-weight:bold;-webkit-text-stroke:0.35px #000;">h6</span>
<span class="t" style="top:515.26px;font-size:16px;left:342.00px;transform:scaleX(0.7692);font-weight:bold;-webkit-text-stroke:0.35px #000;">6.</span>
<span class="t" style="top:515.21px;font-size:19px;font-family:'DejaVu Sans',sans-serif;left:347.95px;transform:scale(1.5625,0.9286);">♝</span>
<span class="t" style="top:515.26px;font-size:16px;left:369.81px;transform:scaleX(0.9944);font-weight:bold;-webkit-text-stroke:0.35px #000;">:f6</span>
<span class="t" style="top:515.21px;font-size:19px;font-family:'DejaVu Sans',sans-serif;left:394.78px;transform:scale(0.9615,0.9286);-webkit-text-stroke:0.5px #000;">♕</span>
<span class="t" style="top:515.26px;font-size:16px;left:412.33px;transform:scaleX(0.9722);font-weight:bold;-webkit-text-stroke:0.35px #000;">:f6</span>
<span class="t" style="top:515.26px;font-size:16px;left:438.30px;transform:scaleX(0.8355);font-weight:bold;-webkit-text-stroke:0.35px #000;">7.e3</span>
<span class="t" style="top:514.00px;font-size:19px;font-family:'DejaVu Sans',sans-serif;left:468.29px;transform:scaleX(1.1364);">♞</span>
<span class="t" style="top:515.26px;font-size:16px;left:487.00px;transform:scaleX(0.7889);font-weight:bold;-webkit-text-stroke:0.35px #000;">d7</span>
<span class="t" style="top:515.26px;font-size:16px;left:507.80px;transform:scaleX(0.8077);font-weight:bold;-webkit-text-stroke:0.35px #000;">8.</span>
<span class="t" style="top:515.21px;font-size:19px;font-family:'DejaVu Sans',sans-serif;left:514.20px;transform:scale(1.5250,0.9286);">♝</span>
<span class="t" style="top:515.26px;font-size:16px;left:535.80px;transform:scaleX(0.7889);font-weight:bold;-webkit-text-stroke:0.35px #000;">d3</span>
<span class="t" style="top:515.26px;font-size:16px;left:557.00px;transform:scaleX(0.7667);font-weight:bold;-webkit-text-stroke:0.35px #000;">dc</span>
<span class="t" style="top:515.26px;font-size:16px;left:577.80px;transform:scaleX(0.8077);font-weight:bold;-webkit-text-stroke:0.35px #000;">9.</span>
<span class="t" style="top:515.21px;font-size:19px;font-family:'DejaVu Sans',sans-serif;left:584.05px;transform:scale(1.5625,0.9286);">♝</span>
<span class="t" style="top:515.26px;font-size:16px;left:606.17px;transform:scaleX(0.8318);font-weight:bold;-webkit-text-stroke:0.35px #000;">:c4</span>
<span class="t" style="top:515.21px;font-size:19px;font-family:'DejaVu Sans',sans-serif;left:625.50px;transform:scale(1.6250,0.9286);">♝</span>
<span class="t" style="top:515.26px;font-size:16px;left:647.80px;transform:scaleX(0.7889);font-weight:bold;-webkit-text-stroke:0.35px #000;">d6</span>
<span class="t" style="top:515.26px;font-size:16px;left:669.48px;transform:scaleX(0.8242);font-weight:bold;-webkit-text-stroke:0.35px #000;">10.O</span></div>
<!-- menu -->
<div id="menu" class="a"></div>
<div class="sep" style="top:195px"></div>
<div class="sep" style="top:249px"></div>
<div class="sep" style="top:303px"></div>
<div class="sep" style="top:357px"></div>
<div class="sep" style="top:389px"></div>
<svg class="a" style="left:146px;top:130px" width="16" height="15" viewBox="0 0 16 15" shape-rendering="crispEdges" ><path d="M0.5 13.5 L0.5 5.5 L1.5 4.5 L4.5 4.5 L5.5 5.5 L5.5 9.5" fill="#fff" stroke="#000" stroke-width="1"/><path d="M0.5 13.5 L4.5 9.5 L14.5 9.5 L10.5 13.5 Z" fill="#808000" stroke="#000" stroke-width="1"/><rect x="1" y="14" width="10" height="1" fill="#000"/><path d="M5.5 9 L5.5 0.5 L10.5 0.5 L12.5 2.5 L12.5 9" fill="#fff" stroke="#000" stroke-width="1"/><rect x="10" y="1" width="1" height="2" fill="#000"/><rect x="13" y="3" width="1" height="6" fill="#000"/><rect x="6" y="3" width="3" height="1" fill="#00f"/><rect x="6" y="6" width="2" height="1" fill="#00f"/><rect x="9" y="6" width="3" height="1" fill="#00f"/><rect x="5" y="11" width="2" height="1" fill="#00f"/></svg>
<svg class="a" style="left:145px;top:152px" width="16" height="15" viewBox="0 0 16 15" shape-rendering="geometricPrecision" ><path d="M1 6 Q8 -2 15 5" fill="none" stroke="#000" stroke-width="2" stroke-dasharray="2 1"/><path d="M1 8 Q8 1 15 8" fill="none" stroke="#000" stroke-width="1.5" stroke-dasharray="1.5 1"/><ellipse cx="8" cy="8.5" rx="6" ry="4" fill="#18a018" stroke="#808000" stroke-width="1"/><path d="M4 6 Q8 3.5 12 6 L10 6.5 L6 6.5 Z" fill="#f4f4e8"/><rect x="3" y="7" width="1" height="1" fill="#f0f000"/><rect x="4" y="8" width="1" height="1" fill="#f0f000"/><rect x="3" y="9" width="1" height="1" fill="#f0f000"/><rect x="5" y="9" width="1" height="1" fill="#f0f000"/><rect x="4" y="10" width="1" height="1" fill="#f0f000"/><rect x="6" y="10" width="1" height="1" fill="#f0f000"/><rect x="5" y="11" width="1" height="1" fill="#f0f000"/><rect x="7" y="11" width="1" height="1" fill="#f0f000"/><rect x="9" y="11" width="1" height="1" fill="#f0f000"/><rect x="10" y="10" width="1" height="1" fill="#f0f000"/><rect x="11" y="9" width="1" height="1" fill="#f0f000"/><rect x="12" y="8" width="1" height="1" fill="#f0f000"/><rect x="11" y="7" width="1" height="1" fill="#f0f000"/><rect x="12" y="10" width="1" height="1" fill="#f0f000"/><rect x="8" y="10" width="1" height="1" fill="#f0f000"/><rect x="10" y="8" width="1" height="1" fill="#f0f000"/><rect x="6" y="6" width="3" height="3" fill="#000"/><rect x="9" y="7" width="1" height="2" fill="#e03010"/><path d="M1 11.5 Q8 16.5 15 11.5" fill="none" stroke="#000" stroke-width="1.6" stroke-dasharray="2 1"/></svg>
<svg class="a" style="left:147px;top:174px" width="13" height="15" viewBox="0 0 13 15" shape-rendering="crispEdges" ><path d="M0.5 0.5 L8.5 0.5 L11.5 3.5 L11.5 13.5 L0.5 13.5 Z" fill="#fff" stroke="#000" stroke-width="1"/><path d="M8.5 0.5 L8.5 3.5 L11.5 3.5" fill="none" stroke="#000"/><rect x="12" y="4" width="1" height="11" fill="#000"/><rect x="1" y="14" width="12" height="1" fill="#000"/><rect x="5" y="2" width="2" height="2" fill="#00f"/><rect x="4" y="5" width="3" height="1" fill="#00f"/><rect x="5" y="6" width="2" height="5" fill="#00f"/><rect x="3" y="11" width="6" height="1" fill="#00f"/></svg>
<svg class="a" style="left:146px;top:206px" width="14" height="14" viewBox="0 0 14 14" shape-rendering="crispEdges" ><rect x="0.5" y="0.5" width="13" height="13" fill="#808080" stroke="#000"/><rect x="3" y="1" width="8" height="6" fill="#fff"/><rect x="3" y="9" width="8" height="4" fill="#000"/><rect x="8" y="10" width="2" height="3" fill="#fff"/><rect x="12" y="1" width="1" height="1" fill="#ff0"/></svg>
<svg class="a" style="left:145px;top:228px" width="16" height="14" viewBox="0 0 16 14" shape-rendering="crispEdges" ><path d="M0.5 3.5 L5.5 3.5 L5.5 10.5 L9.5 10.5 L9.5 12.5 L0.5 12.5 Z" fill="#fff" stroke="#000"/><rect x="10" y="11" width="1" height="3" fill="#000"/><rect x="1" y="13" width="10" height="1" fill="#000"/><rect x="2" y="5" width="3" height="1" fill="#00f"/><rect x="2" y="8" width="2" height="1" fill="#00f"/><rect x="2" y="11" width="3" height="1" fill="#00f"/><path d="M5.5 0.5 L11.5 0.5 L14.5 3.5 L14.5 10.5 L5.5 10.5 Z" fill="#fff" stroke="#000"/><path d="M11.5 0.5 L11.5 3.5 L14.5 3.5" fill="none" stroke="#000"/><rect x="15" y="4" width="1" height="8" fill="#000"/><rect x="11" y="11" width="5" height="1" fill="#000"/></svg>
<svg class="a" style="left:147px;top:336px" width="13" height="15" viewBox="0 0 13 15" shape-rendering="crispEdges" ><path d="M0.5 0.5 L8.5 0.5 L11.5 3.5 L11.5 13.5 L0.5 13.5 Z" fill="#00f" stroke="#000"/><path d="M8.5 0.5 L8.5 3.5 L11.5 3.5 Z" fill="#fff" stroke="#000"/><rect x="12" y="4" width="1" height="11" fill="#000"/><rect x="1" y="14" width="12" height="1" fill="#000"/><rect x="3" y="2" width="3" height="1" fill="#fff"/><rect x="2" y="4" width="3" height="1" fill="#fff"/><rect x="6" y="4" width="2" height="1" fill="#fff"/><rect x="3" y="6" width="3" height="1" fill="#fff"/><rect x="7" y="6" width="4" height="1" fill="#fff"/><rect x="2" y="8" width="3" height="1" fill="#fff"/><rect x="6" y="8" width="4" height="1" fill="#fff"/><rect x="3" y="10" width="3" height="1" fill="#fff"/><rect x="7" y="10" width="4" height="1" fill="#fff"/><rect x="2" y="12" width="3" height="1" fill="#fff"/><rect x="6" y="12" width="4" height="1" fill="#fff"/></svg>
<svg class="a" style="left:147px;top:370px" width="8" height="8" viewBox="0 0 8 8" shape-rendering="geometricPrecision" style2=""><path d="M0.5 3.5 L2.5 6 L6.5 0.8" fill="none" stroke="#000" stroke-width="2"/></svg>
<svg class="a" style="left:399px;top:403px" width="4" height="7" viewBox="0 0 4 7" shape-rendering="geometricPrecision" ><path d="M0 0 L4 3.5 L0 7 Z" fill="#000"/></svg>
<div class="L"><span class="t" style="top:128.84px;font-size:12px;left:166.34px;transform:scaleX(0.9597);color:#10104e;"><u>P</u>artie laden...</span>
<span class="t" style="top:128.84px;font-size:12px;left:379.63px;transform:scaleX(0.9692);color:#10104e;">F8</span>
<span class="t" style="top:150.84px;font-size:12px;left:167.30px;transform:scaleX(0.9415);color:#10104e;">Ausgewählte Partien <u>l</u>aden</span>
<span class="t" style="top:150.84px;font-size:12px;left:365.34px;transform:scaleX(0.9607);color:#10104e;">Enter</span>
<span class="t" style="top:172.84px;font-size:12px;left:166.35px;transform:scaleX(0.9494);color:#10104e;"><u>I</u>nfo über Partie</span>
<span class="t" style="top:172.84px;font-size:12px;left:338.76px;transform:scaleX(0.9386);color:#10104e;">Strg+Enter</span>
<span class="t" style="top:204.84px;font-size:12px;left:166.36px;transform:scaleX(0.9351);color:#10104e;">als Datenmenge <u>s</u>peichern...</span>
<span class="t" style="top:204.84px;font-size:12px;left:379.63px;transform:scaleX(0.9692);color:#10104e;">F2</span>
<span class="t" style="top:226.84px;font-size:12px;left:167.30px;transform:scaleX(0.9613);color:#10104e;">Temporär speicher<u>n</u></span>
<span class="t" style="top:226.84px;font-size:12px;left:352.76px;transform:scaleX(0.9405);color:#10104e;">Strg+F2</span>
<span class="t" style="top:258.84px;font-size:12px;left:166.34px;transform:scaleX(0.9575);color:#10104e;">Partien als gelöschte <u>m</u>arkieren</span>
<span class="t" style="top:258.84px;font-size:12px;left:348.84px;transform:scaleX(0.9644);color:#10104e;">Strg+Del</span>
<span class="t" style="top:280.84px;font-size:12px;left:166.36px;transform:scaleX(0.9449);color:#aca899;">Gelöschte Partien <u>w</u>iederherstellen</span>
<span class="t" style="top:280.84px;font-size:12px;left:357.40px;transform:scaleX(0.9421);color:#aca899;">Alt+Del</span>
<span class="t" style="top:312.84px;font-size:12px;left:167.30px;transform:scaleX(0.9483);color:#10104e;"><u>A</u>lle Partien markieren</span>
<span class="t" style="top:312.84px;font-size:12px;left:358.67px;transform:scaleX(0.9333);color:#10104e;">Strg+A</span>
<span class="t" style="top:334.84px;font-size:12px;left:166.35px;transform:scaleX(0.9457);color:#10104e;">Markierungen <u>u</u>mkehren</span>
<span class="t" style="top:334.84px;font-size:12px;left:362.51px;transform:scaleX(0.9900);color:#10104e;">Strg+I</span>
<span class="t" style="top:366.84px;font-size:12px;left:167.30px;transform:scaleX(0.9021);color:#10104e;"><u>Z</u>eige Fußzeile mit Notation</span>
<span class="t" style="top:366.84px;font-size:12px;left:356.41px;transform:scaleX(0.9944);color:#10104e;">Ctrl+&#x27;+&#x27;</span>
<span class="t" style="top:398.84px;font-size:12px;left:166.35px;transform:scaleX(0.9527);color:#10104e;">Partien an<u>o</u>rdnen</span></div>
<svg class="a" style="left:0;top:0" width="738" height="30" viewBox="0 0 738 30" shape-rendering="geometricPrecision"><defs>
<linearGradient id="gb" x1="0" y1="0" x2="1" y2="1"><stop offset="0" stop-color="#5a92f7"/><stop offset="0.35" stop-color="#3264e6"/><stop offset="1" stop-color="#1c45c8"/></linearGradient>
<linearGradient id="gd" x1="0" y1="0" x2="1" y2="1"><stop offset="0" stop-color="#3a6fe8"/><stop offset="0.5" stop-color="#2c5ddd"/><stop offset="1" stop-color="#244fd0"/></linearGradient>
<linearGradient id="gr" x1="0" y1="0" x2="1" y2="1"><stop offset="0" stop-color="#f0947a"/><stop offset="0.35" stop-color="#e0603c"/><stop offset="1" stop-color="#b8300f"/></linearGradient>
</defs><rect x="667.5" y="5.5" width="20" height="20" rx="3.5" fill="url(#gb)" stroke="#fff" stroke-width="1"/><rect x="672" y="18" width="7" height="3" fill="#fff"/><rect x="690.5" y="5.5" width="20" height="20" rx="3.5" fill="url(#gd)" stroke="#7f9fee" stroke-width="1"/><rect x="695.5" y="11.5" width="10" height="8" fill="none" stroke="#7b9bea" stroke-width="1"/><rect x="695" y="10" width="11" height="2" fill="#7b9bea"/><rect x="713.5" y="5.5" width="20" height="20" rx="3.5" fill="url(#gr)" stroke="#fff" stroke-width="1"/><path d="M718.3 10.3 L729.2 21.2 M729.2 10.3 L718.3 21.2" stroke="#fff" stroke-width="2.5" stroke-linecap="butt" fill="none"/></svg><svg class="a" style="left:6px;top:7px" width="16" height="16" viewBox="0 0 16 16" shape-rendering="crispEdges" ><rect x="0" y="0" width="16" height="16" fill="#0000e0"/><rect x="0" y="0" width="16" height="2" fill="#c8c8c0"/><rect x="0" y="14" width="16" height="2" fill="#008080"/><rect x="0" y="0" width="1" height="14" fill="#c8c8c0"/><rect x="2" y="5" width="2" height="2" fill="#000"/><rect x="4" y="4" width="2" height="2" fill="#fff"/><rect x="6" y="4" width="2" height="2" fill="#000"/><rect x="8" y="3" width="2" height="2" fill="#fff"/><rect x="10" y="3" width="2" height="2" fill="#000"/><rect x="12" y="3" width="2" height="2" fill="#fff"/><rect x="3" y="7" width="2" height="2" fill="#fff"/><rect x="5" y="6" width="2" height="2" fill="#000"/><rect x="7" y="6" width="2" height="2" fill="#fff"/><rect x="9" y="5" width="2" height="2" fill="#000"/><rect x="11" y="5" width="2" height="2" fill="#fff"/><rect x="13" y="5" width="2" height="2" fill="#000"/><rect x="4" y="9" width="2" height="2" fill="#000"/><rect x="6" y="8" width="2" height="2" fill="#fff"/><rect x="8" y="8" width="2" height="2" fill="#000"/><rect x="10" y="7" width="2" height="2" fill="#fff"/><rect x="12" y="7" width="2" height="2" fill="#000"/><rect x="7" y="10" width="2" height="2" fill="#000"/><rect x="9" y="10" width="2" height="2" fill="#fff"/><rect x="11" y="9" width="2" height="2" fill="#000"/><rect x="13" y="9" width="2" height="2" fill="#fff"/><rect x="10" y="12" width="2" height="2" fill="#fff"/><rect x="12" y="11" width="2" height="2" fill="#000"/></svg>
<svg class="a" style="left:425px;top:120px" width="12" height="21" viewBox="0 0 12 21" shape-rendering="crispEdges"><rect x="0" y="0" width="1" height="1" fill="#000"/><rect x="0" y="1" width="2" height="1" fill="#000"/><rect x="0" y="2" width="1" height="1" fill="#000"/><rect x="1" y="2" width="1" height="1" fill="#fff"/><rect x="2" y="2" width="1" height="1" fill="#000"/><rect x="0" y="3" width="1" height="1" fill="#000"/><rect x="1" y="3" width="2" height="1" fill="#fff"/><rect x="3" y="3" width="1" height="1" fill="#000"/><rect x="0" y="4" width="1" height="1" fill="#000"/><rect x="1" y="4" width="3" height="1" fill="#fff"/><rect x="4" y="4" width="1" height="1" fill="#000"/><rect x="0" y="5" width="1" height="1" fill="#000"/><rect x="1" y="5" width="4" height="1" fill="#fff"/><rect x="5" y="5" width="1" height="1" fill="#000"/><rect x="0" y="6" width="1" height="1" fill="#000"/><rect x="1" y="6" width="5" height="1" fill="#fff"/><rect x="6" y="6" width="1" height="1" fill="#000"/><rect x="0" y="7" width="1" height="1" fill="#000"/><rect x="1" y="7" width="6" height="1" fill="#fff"/><rect x="7" y="7" width="1" height="1" fill="#000"/><rect x="0" y="8" width="1" height="1" fill="#000"/><rect x="1" y="8" width="7" height="1" fill="#fff"/><rect x="8" y="8" width="1" height="1" fill="#000"/><rect x="0" y="9" width="1" height="1" fill="#000"/><rect x="1" y="9" width="8" height="1" fill="#fff"/><rect x="9" y="9" width="1" height="1" fill="#000"/><rect x="0" y="10" width="1" height="1" fill="#000"/><rect x="1" y="10" width="9" height="1" fill="#fff"/><rect x="10" y="10" width="1" height="1" fill="#000"/><rect x="0" y="11" width="1" height="1" fill="#000"/><rect x="1" y="11" width="6" height="1" fill="#fff"/><rect x="7" y="11" width="5" height="1" fill="#000"/><rect x="0" y="12" width="1" height="1" fill="#000"/><rect x="1" y="12" width="3" height="1" fill="#fff"/><rect x="4" y="12" width="1" height="1" fill="#000"/><rect x="5" y="12" width="2" height="1" fill="#fff"/><rect x="7" y="12" width="1" height="1" fill="#000"/><rect x="0" y="13" width="1" height="1" fill="#000"/><rect x="1" y="13" width="2" height="1" fill="#fff"/><rect x="3" y="13" width="2" height="1" fill="#000"/><rect x="5" y="13" width="2" height="1" fill="#fff"/><rect x="7" y="13" width="1" height="1" fill="#000"/><rect x="0" y="14" width="1" height="1" fill="#000"/><rect x="1" y="14" width="1" height="1" fill="#fff"/><rect x="2" y="14" width="1" height="1" fill="#000"/><rect x="5" y="14" width="1" height="1" fill="#000"/><rect x="6" y="14" width="2" height="1" fill="#fff"/><rect x="8" y="14" width="1" height="1" fill="#000"/><rect x="0" y="15" width="2" height="1" fill="#000"/><rect x="5" y="15" width="1" height="1" fill="#000"/><rect x="6" y="15" width="2" height="1" fill="#fff"/><rect x="8" y="15" width="1" height="1" fill="#000"/><rect x="0" y="16" width="1" height="1" fill="#000"/><rect x="6" y="16" width="1" height="1" fill="#000"/><rect x="7" y="16" width="2" height="1" fill="#fff"/><rect x="9" y="16" width="1" height="1" fill="#000"/><rect x="6" y="17" width="1" height="1" fill="#000"/><rect x="7" y="17" width="2" height="1" fill="#fff"/><rect x="9" y="17" width="1" height="1" fill="#000"/><rect x="7" y="18" width="1" height="1" fill="#000"/><rect x="8" y="18" width="2" height="1" fill="#fff"/><rect x="10" y="18" width="1" height="1" fill="#000"/><rect x="7" y="19" width="1" height="1" fill="#000"/><rect x="8" y="19" width="2" height="1" fill="#fff"/><rect x="10" y="19" width="1" height="1" fill="#000"/><rect x="8" y="20" width="2" height="1" fill="#000"/></svg>
</div>
</body></html>
